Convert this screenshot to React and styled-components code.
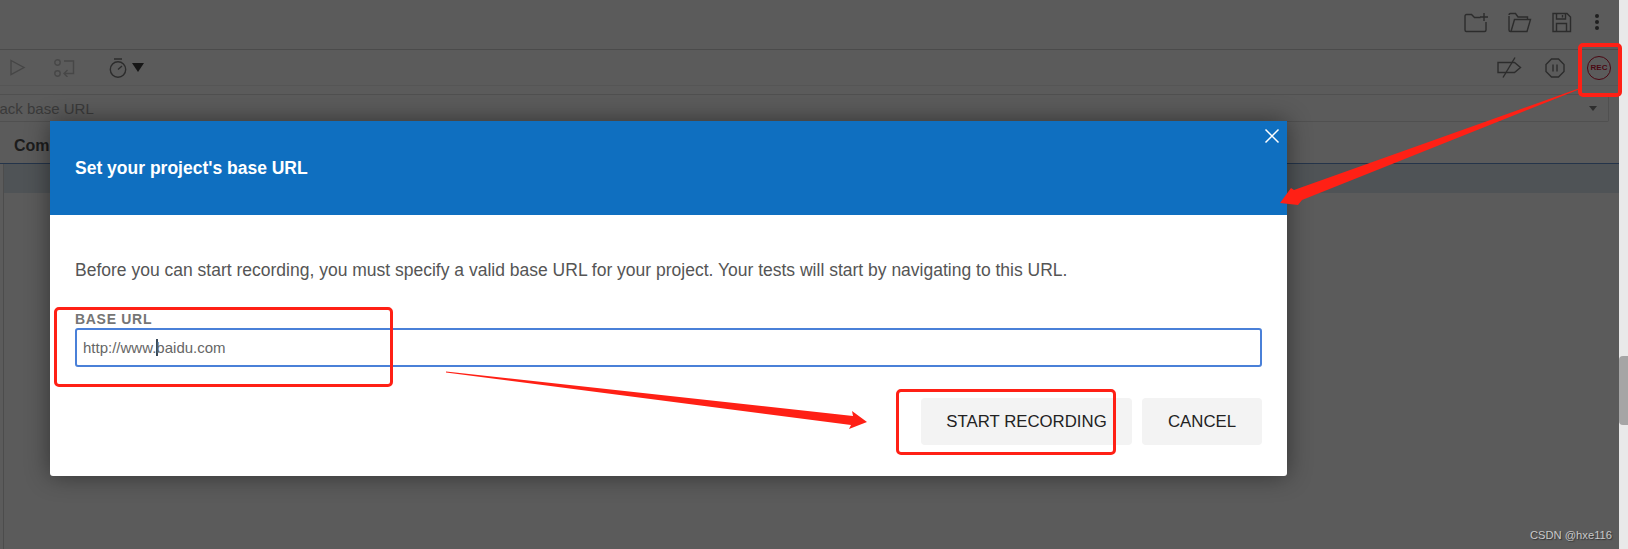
import React from "react";
import styled, { createGlobalStyle } from "styled-components";

const Global = createGlobalStyle`
  html, body {
    margin: 0;
    padding: 0;
    height: 549px;
    overflow: hidden;
    background: #5b5b5b;
    font-family: "Liberation Sans", Arial, sans-serif;
  }
`;

export default function App() {
  return (
    <Page>
      <Global />
      <Workspace>
        <TopBar>
          <Icon size={24}>
            <path d="M1 6V20a1.500 1.500 0 0 0 1.500 1.500H20.500a1.500 1.500 0 0 0 1.500-1.500V12" />
            <path d="M1 6a1.500 1.500 0 0 1 1.500-1.500H7.500l3 3h6" />
            <path d="M20 3v8M16 7h8" />
          </Icon>
          <Icon size={24}>
            <path d="M1 6V20a1.500 1.500 0 0 0 1.500 1.500H19l3.500-12H6.500l-3.500 12" />
            <path d="M19.500 9.500V7H10L7.500 3.500H2.500A1.500 1.500 0 0 0 1 5" />
          </Icon>
          <Icon size={24}>
            <path d="M1 3.500h14l3.500 3.500V21.500H1z" />
            <path d="M4.500 3.500v5.500h9V3.500M10.500 5v2.500" />
            <path d="M4.500 21.500v-8h10v8" />
          </Icon>
          <Dots>
            <i />
            <i />
            <i />
          </Dots>
        </TopBar>
        <ToolBar>
          <ToolGroup>
            <PlayIcon width={16} height={17} viewBox="0 0 16 17">
              <path d="M1 1.500l13 7-13 7z" />
            </PlayIcon>
            <StepIcon width={24} height={18} viewBox="0 0 24 18">
              <circle cx="3.500" cy="3.500" r="2.700" />
              <circle cx="3.500" cy="14.500" r="2.700" />
              <path d="M10 2h9.500v12.500H10M13.500 11l-3.500 3.500 3.500 3.500" />
            </StepIcon>
            <TimerGroup>
              <Icon size={20}>
                <circle cx="10" cy="11.500" r="7.700" />
                <path d="M6 1h8M10 11.500l4-3.500" />
              </Icon>
              <Caret />
            </TimerGroup>
          </ToolGroup>
          <RecGroup>
            <Icon size={26}>
              <path d="M1 7.500h16.500l6 5-6 5H1z" />
              <path d="M18 2.500L6 22.500" />
            </Icon>
            <Icon size={20}>
              <path d="M6.500 1h7l5.500 5.500v7L13.500 19h-7L1 13.500v-7z" />
              <path d="M8 6.500v7M12 6.500v7" />
            </Icon>
            <RecBadge>REC</RecBadge>
          </RecGroup>
        </ToolBar>
        <UrlRow>
          <UrlField>
            <UrlText>Playback base URL</UrlText>
            <FieldCaret />
          </UrlField>
        </UrlRow>
        <TabRow>Command</TabRow>
        <TableArea>
          <TableColumn>
            <TableHead />
          </TableColumn>
        </TableArea>
      </Workspace>
      <ScrollTrack>
        <ScrollThumb />
      </ScrollTrack>

      <Modal>
        <ModalHeader>
          <ModalTitle>Set your project's base URL</ModalTitle>
          <CloseButton viewBox="0 0 16 16">
            <path d="M1.500 1.500l13 13M14.500 1.500l-13 13" />
          </CloseButton>
        </ModalHeader>
        <ModalBody>
          <Description>
            Before you can start recording, you must specify a valid base URL
            for your project. Your tests will start by navigating to this URL.
          </Description>
          <FieldLabel>BASE URL</FieldLabel>
          <InputBox>
            http://www.<Cursor />baidu.com
          </InputBox>
          <Actions>
            <ActionButton $width={211}>START RECORDING</ActionButton>
            <ActionButton $width={120}>CANCEL</ActionButton>
          </Actions>
        </ModalBody>
      </Modal>

      <Annotation viewBox="0 0 1628 549">
        <polygon points="1580,88 1580,89 1302,200 1298,205 1280,203 1291,188 1294,190" />
        <polygon points="446,371.500 853,416 852,411 867,422 849,429 851,425 446,372.500" />
      </Annotation>
      <RedBox $x={1578} $y={43} $w={44} $h={54} $stroke={4} />
      <RedBox $x={54} $y={307} $w={339} $h={80} $stroke={3} />
      <RedBox $x={896} $y={389} $w={220} $h={66} $stroke={3} />

      <Watermark>CSDN @hxe116</Watermark>
    </Page>
  );
}

function Icon({ size, children }) {
  return (
    <IconSvg width={size} height={size} viewBox={`0 0 ${size} ${size}`}>
      {children}
    </IconSvg>
  );
}

const Page = styled.div`
  position: relative;
  width: 1628px;
  height: 549px;
  display: flex;
  overflow: hidden;
  background: #5b5b5b;
`;

const Workspace = styled.div`
  flex: 1;
  min-width: 0;
  display: flex;
  flex-direction: column;
`;

const TopBar = styled.div`
  height: 50px;
  box-sizing: border-box;
  border-bottom: 1px solid #4b4b4b;
  display: flex;
  align-items: center;
  justify-content: flex-end;
  gap: 20px;
  padding: 0 20px 6px 0;
`;

const IconSvg = styled.svg`
  display: block;
  flex: none;
  fill: none;
  stroke: #2c2c2c;
  stroke-width: 1.400;
`;

const PlayIcon = styled(IconSvg)`
  stroke: #464646;
`;

const StepIcon = styled(IconSvg)`
  stroke: #474747;
`;

const Dots = styled.div`
  display: flex;
  flex-direction: column;
  gap: 2px;
  margin-left: -1px;
  i {
    display: block;
    width: 4px;
    height: 4px;
    border-radius: 50%;
    background: #1f1f1f;
  }
`;

const ToolBar = styled.div`
  height: 36px;
  box-sizing: border-box;
  border-bottom: 1px solid #555;
  display: flex;
  align-items: center;
  justify-content: space-between;
  padding: 0 8px 0 10px;
`;

const ToolGroup = styled.div`
  display: flex;
  align-items: center;
  gap: 28px;
`;

const RecGroup = styled.div`
  display: flex;
  align-items: center;
  gap: 22px;
`;

const TimerGroup = styled.div`
  display: flex;
  align-items: center;
  gap: 4px;
  margin-left: 2px;
`;

const Caret = styled.span`
  width: 0;
  height: 0;
  border-left: 6px solid transparent;
  border-right: 6px solid transparent;
  border-top: 9px solid #161616;
`;

const RecBadge = styled.div`
  width: 24px;
  height: 24px;
  box-sizing: border-box;
  border: 1px solid #4a0712;
  border-radius: 50%;
  display: flex;
  align-items: center;
  justify-content: center;
  color: #4a0712;
  font-size: 8px;
  font-weight: 700;
`;

const UrlRow = styled.div`
  padding: 8px 10px 0 0;
`;

const UrlField = styled.div`
  height: 28px;
  box-sizing: border-box;
  border: 1px solid #505050;
  border-left: none;
  border-radius: 0 2px 2px 0;
  display: flex;
  align-items: center;
  justify-content: space-between;
  padding-right: 11px;
  overflow: hidden;
`;

const UrlText = styled.span`
  margin-left: -38px;
  font-size: 15px;
  color: #3a3a3a;
`;

const FieldCaret = styled.span`
  width: 0;
  height: 0;
  border-left: 4.500px solid transparent;
  border-right: 4.500px solid transparent;
  border-top: 5px solid #2e2e2e;
`;

const TabRow = styled.div`
  height: 41px;
  box-sizing: border-box;
  padding: 15px 0 0 14px;
  font-size: 16px;
  font-weight: 700;
  color: #1c1c1c;
`;

const TableArea = styled.div`
  flex: 1;
  display: flex;
  padding-left: 3px;
  border-top: 1px solid #24344a;
`;

const TableColumn = styled.div`
  flex: 1;
  border-left: 1px solid #4c4c4c;
`;

const TableHead = styled.div`
  height: 29px;
  background: #4f5356;
`;

const ScrollTrack = styled.div`
  width: 9px;
  flex: none;
  position: relative;
  background: #e9e9e9;
`;

const ScrollThumb = styled.div`
  position: absolute;
  top: 356px;
  left: 0;
  width: 9px;
  height: 69px;
  border-radius: 4px 0 0 4px;
  background: #a5a5a5;
`;

const Modal = styled.div`
  position: absolute;
  left: 50px;
  top: 121px;
  width: 1237px;
  height: 355px;
  display: flex;
  flex-direction: column;
  background: #fff;
  border-radius: 0 0 3px 3px;
  box-shadow: 0 0 24px rgba(0, 0, 0, 0.45);
`;

const ModalHeader = styled.div`
  position: relative;
  height: 94px;
  flex: none;
  display: flex;
  align-items: center;
  padding-left: 25px;
  background: #0f6fc0;
`;

const ModalTitle = styled.h2`
  margin: 0;
  font-size: 17.500px;
  font-weight: 700;
  color: #fff;
`;

const CloseButton = styled.svg`
  position: absolute;
  top: 7px;
  right: 7px;
  width: 16px;
  height: 16px;
  fill: none;
  stroke: #fff;
  stroke-width: 1.500;
`;

const ModalBody = styled.div`
  flex: 1;
  padding: 46px 25px 0 25px;
`;

const Description = styled.p`
  margin: 0;
  font-size: 17.500px;
  line-height: 18px;
  color: #555;
`;

const FieldLabel = styled.div`
  margin-top: 32px;
  font-size: 14px;
  line-height: 16px;
  font-weight: 700;
  letter-spacing: 0.700px;
  color: #757575;
`;

const InputBox = styled.div`
  height: 39px;
  margin-top: 1px;
  box-sizing: border-box;
  border: 2px solid #4a80d8;
  border-radius: 3px;
  display: flex;
  align-items: center;
  padding-left: 6px;
  font-size: 15px;
  color: #666;
  white-space: pre;
`;

const Cursor = styled.span`
  width: 2px;
  height: 17px;
  margin-right: -2px;
  background: #3a4a5a;
`;

const Actions = styled.div`
  display: flex;
  justify-content: flex-end;
  gap: 10px;
  margin: 31px 0 0;
`;

const ActionButton = styled.div`
  width: ${(p) => p.$width}px;
  height: 47px;
  display: flex;
  align-items: center;
  justify-content: center;
  background: #f3f3f3;
  border-radius: 4px;
  font-size: 16.800px;
  color: #222;
`;

const Annotation = styled.svg`
  position: absolute;
  left: 0;
  top: 0;
  width: 1628px;
  height: 549px;
  fill: #ff2015;
  pointer-events: none;
`;

const RedBox = styled.div`
  position: absolute;
  left: ${(p) => p.$x}px;
  top: ${(p) => p.$y}px;
  width: ${(p) => p.$w}px;
  height: ${(p) => p.$h}px;
  box-sizing: border-box;
  border: ${(p) => p.$stroke}px solid #ff2015;
  border-radius: 5px;
`;

const Watermark = styled.div`
  position: absolute;
  right: 16px;
  bottom: 8px;
  font-size: 11.200px;
  color: #c8c8c8;
  text-shadow: 1px 1px 1px #333;
`;
